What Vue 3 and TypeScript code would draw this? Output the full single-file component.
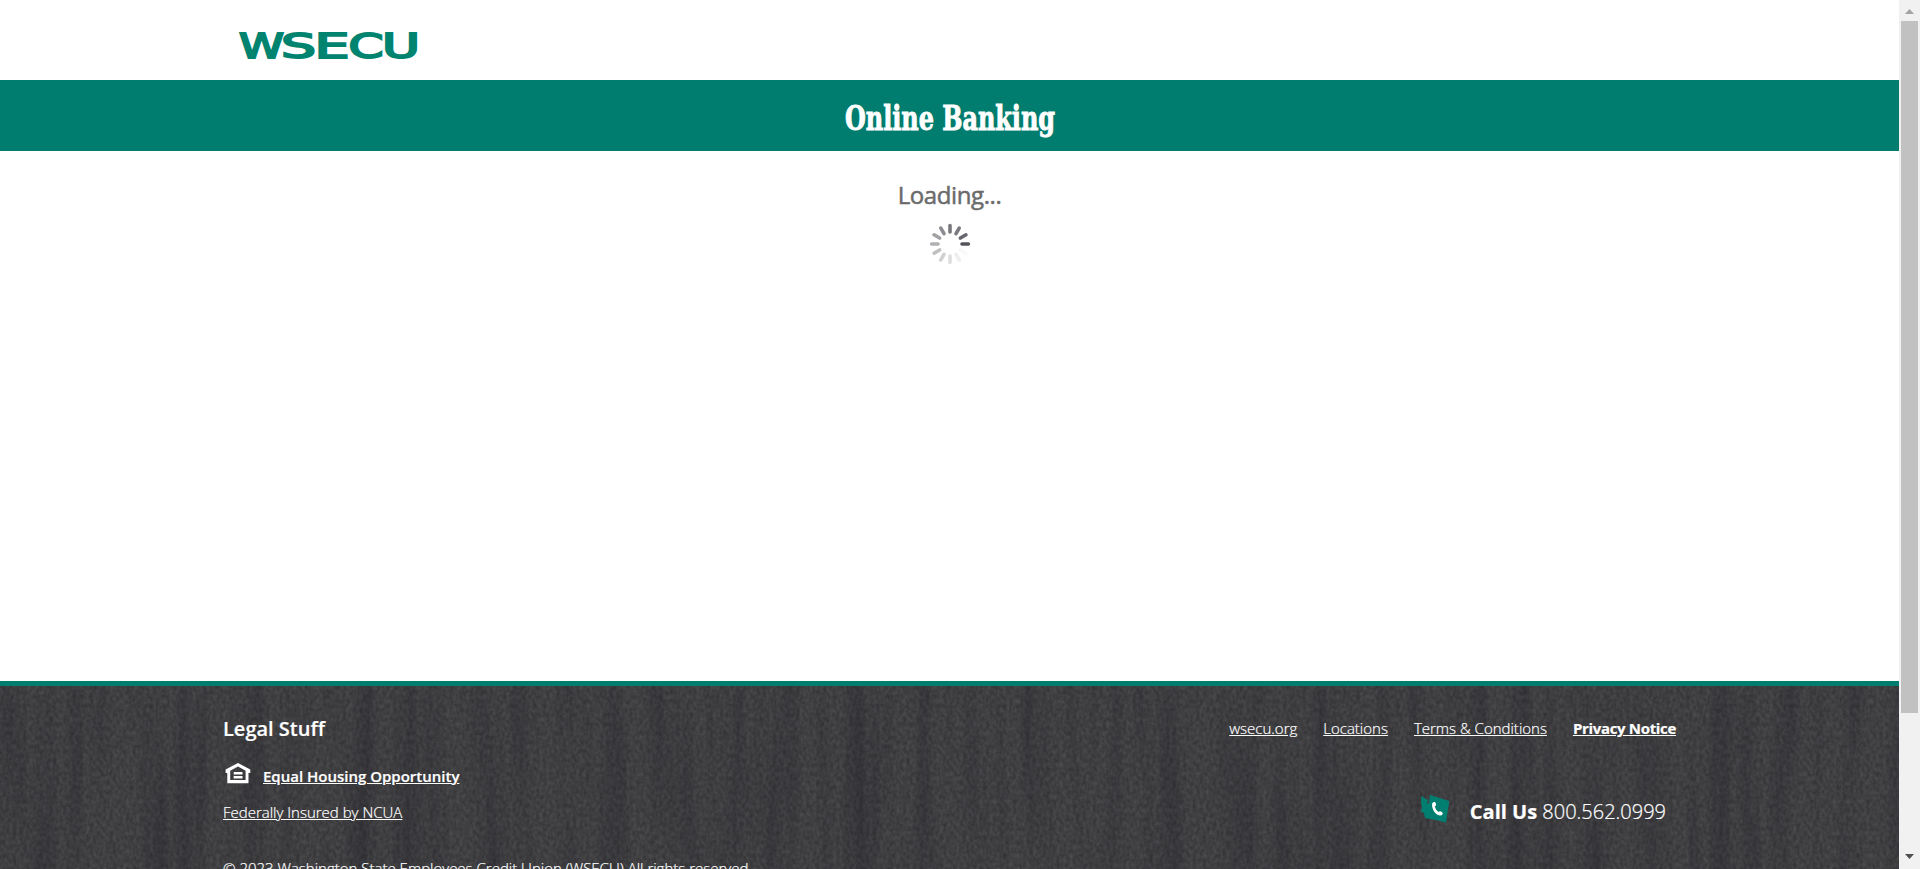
<script setup lang="ts">
interface FooterLink {
  label: string
  strong?: boolean
}

const links: FooterLink[] = [
  { label: 'wsecu.org' },
  { label: 'Locations' },
  { label: 'Terms & Conditions' },
  { label: 'Privacy Notice', strong: true },
]

const shades: string[] = [
  '#54545c', '#67676f', '#7a7a80', '#77777d', '#8c8c92', '#a0a0a5',
  '#b0b0b4', '#c0c0c3', '#d1d1d3', '#dededf', '#eeeeef', '#f8f8f8',
]
</script>

<template>
  <div class="window">
    <div class="page">
      <header class="top">
        <svg class="logo" width="180" height="30" viewBox="0 0 180 30" role="img" aria-label="WSECU">
          <g class="wordmark">
            <text x="0" y="27" textLength="45" lengthAdjust="spacingAndGlyphs">W</text>
            <text x="42" y="27" textLength="35" lengthAdjust="spacingAndGlyphs">S</text>
            <text x="75.5" y="27" textLength="35" lengthAdjust="spacingAndGlyphs">E</text>
            <text x="109.5" y="27" textLength="35" lengthAdjust="spacingAndGlyphs">C</text>
            <text x="143" y="27" textLength="38" lengthAdjust="spacingAndGlyphs">U</text>
          </g>
        </svg>
      </header>

      <div class="banner">
        <svg width="220" height="48" viewBox="0 0 220 48" role="heading" aria-label="Online Banking">
          <text class="title" x="5" y="32" textLength="210" lengthAdjust="spacingAndGlyphs">Online Banking</text>
        </svg>
      </div>

      <main class="content">
        <div class="loading">Loading...</div>
        <svg class="spinner" width="42" height="42" viewBox="-21 -21 42 42">
          <line
            v-for="(shade, i) in shades"
            :key="i"
            x1="12" y1="0" x2="18.4" y2="0"
            :stroke="shade"
            stroke-width="3.6"
            stroke-linecap="round"
            :transform="`rotate(${-30 * i})`"
          />
        </svg>
      </main>

      <footer class="footer">
        <svg class="grain" width="1899" height="183">
          <defs>
            <filter id="streaks" x="0" y="0" width="100%" height="100%" color-interpolation-filters="sRGB">
              <feTurbulence type="fractalNoise" baseFrequency="0.045 0.003" numOctaves="3" seed="7" />
              <feColorMatrix values="0 0 0 0 0.1  0 0 0 0 0.1  0 0 0 0 0.13  0.7 0 0 0 -0.3" />
            </filter>
            <filter id="fibres" x="0" y="0" width="100%" height="100%" color-interpolation-filters="sRGB">
              <feTurbulence type="fractalNoise" baseFrequency="0.3 0.22" numOctaves="2" seed="3" />
              <feColorMatrix values="0.13 0 0 0 0.185  0.13 0 0 0 0.185  0.13 0 0 0 0.195  0 0 0 0 1" />
            </filter>
          </defs>
          <rect width="1899" height="183" filter="url(#fibres)" />
          <rect width="1899" height="183" filter="url(#streaks)" />
        </svg>

        <div class="inner">
          <section class="legal">
            <h2>Legal Stuff</h2>
            <div class="housing">
              <svg width="26" height="21" viewBox="0 0 26 21">
                <path fill="#fff" fill-rule="evenodd" d="M13 0 L25.3 6.5 V10 H23.5 V20.3 H2.3 V10 H.6 V6.5Z M13 3.5 L5.2 7.7 V17 H20.6 V7.7Z" />
                <path fill="#fff" d="M8.7 9h8.8v2.4H8.7z M8.7 13h8.8v2.4H8.7z" />
              </svg>
              <a class="strong">Equal Housing Opportunity</a>
            </div>
            <a class="ncua">Federally Insured by NCUA</a>
            <p class="copyright">© 2023 Washington State Employees Credit Union (WSECU) All rights reserved.</p>
          </section>

          <section class="contact">
            <nav>
              <a v-for="link in links" :key="link.label" :class="{ bold: link.strong }">{{ link.label }}</a>
            </nav>
            <div class="call">
              <svg width="30" height="28" viewBox="0 0 30 28">
                <path fill="#007f70" d="M1.5 1 L8 5.2 L6.5 8.5 L9 8 L10 0 L29.3 6 L26 27.4 L16 25 L5 23 L4 18 L.8 16.5 L2 13 L1 8Z" />
                <path fill="#fff" d="M12.2 8.5 C13.4 6.4 15.5 6.5 15.9 8.7 C16.2 10.2 15.9 10.9 14.8 11.3 C15.3 13.8 16.8 16 18.7 17.1 C19.6 16 20.6 16.1 21.8 17.1 C23.6 18.5 22.7 20.1 20.6 20.6 C15.4 20.5 11.2 13.7 12.2 8.5Z" />
              </svg>
              <span><b>Call Us</b> 800.562.0999</span>
            </div>
          </section>
        </div>
      </footer>
    </div>

    <div class="scrollbar">
      <svg width="9" height="5" viewBox="0 0 9 5"><path fill="#a3a3a3" d="M4.5 0 L9 5 H0Z" /></svg>
      <div class="thumb"></div>
      <svg class="down" width="9" height="5" viewBox="0 0 9 5"><path fill="#505050" d="M0 0 H9 L4.5 5Z" /></svg>
    </div>
  </div>
</template>

<style>
body {
  overflow: hidden;
}
</style>

<style scoped>
* {
  box-sizing: border-box;
}
.window {
  display: flex;
  width: 1920px;
  height: 869px;
  overflow: hidden;
  background: #fff;
  font-family: "Open Sans", sans-serif;
}
.page {
  display: flex;
  flex-direction: column;
  width: 1899px;
  height: 869px;
}
.top {
  height: 80px;
  padding: 31px 0 0 239px;
}
.logo {
  display: block;
  overflow: visible;
}
.wordmark {
  font: 400 34.5px "DejaVu Sans", sans-serif;
  fill: #00836f;
  stroke: #00836f;
  stroke-width: 2;
}
.banner {
  display: flex;
  justify-content: center;
  height: 71px;
  padding: 18px 0 0 1px;
  background: #007d6e;
}
.title {
  font: 700 34px "DejaVu Serif Condensed", "DejaVu Serif", serif;
  fill: #fff;
  stroke: #fff;
  stroke-width: 0.9;
}
.content {
  display: flex;
  flex: 1;
  flex-direction: column;
  align-items: center;
  padding-top: 27px;
}
.loading {
  height: 33px;
  font-size: 24px;
  font-weight: 400;
  line-height: 33px;
  letter-spacing: -0.4px;
  color: #6b6b6b;
  -webkit-text-stroke: 0.5px #6b6b6b;
}
.spinner {
  margin-top: 12px;
}
.footer {
  position: relative;
  height: 188px;
  overflow: hidden;
  border-top: 5px solid #007d6e;
  background: #3e3e40;
  color: #fff;
}
.grain {
  position: absolute;
  inset: 0;
}
.inner {
  position: relative;
  display: flex;
  justify-content: space-between;
  padding: 28px 223px 0 223px;
  font-size: 15px;
  font-weight: 300;
  line-height: 30px;
  -webkit-text-stroke: 0.2px #fff;
}
.legal h2 {
  margin: 0;
  font-size: 20px;
  font-weight: 600;
  line-height: 30px;
}
a {
  text-decoration: underline;
  white-space: nowrap;
}
.housing {
  display: flex;
  gap: 12px;
  margin-top: 17px;
}
.housing svg {
  margin: 2px 0 0 2px;
}
.strong {
  font-weight: 600;
}
.bold {
  font-weight: 700;
  letter-spacing: -0.33px;
}
.ncua {
  display: block;
  width: max-content;
  margin-top: 6px;
}
.copyright {
  margin: 26px 0 0;
  white-space: nowrap;
}
nav {
  display: flex;
  justify-content: flex-end;
  gap: 26px;
  margin-top: -1px;
}
.call {
  display: flex;
  justify-content: flex-end;
  gap: 20px;
  margin-top: 52px;
  padding-right: 10px;
  font-size: 20px;
}
.call span {
  line-height: 34px;
}
.call b {
  font-weight: 700;
}
.scrollbar {
  display: flex;
  flex-direction: column;
  align-items: center;
  width: 21px;
  height: 869px;
  padding: 9px 0 10px;
  background: #f1f1f1;
}
.thumb {
  width: 17px;
  height: 692px;
  margin-top: 7px;
  background: #c1c1c1;
}
.down {
  margin-top: auto;
}
</style>
